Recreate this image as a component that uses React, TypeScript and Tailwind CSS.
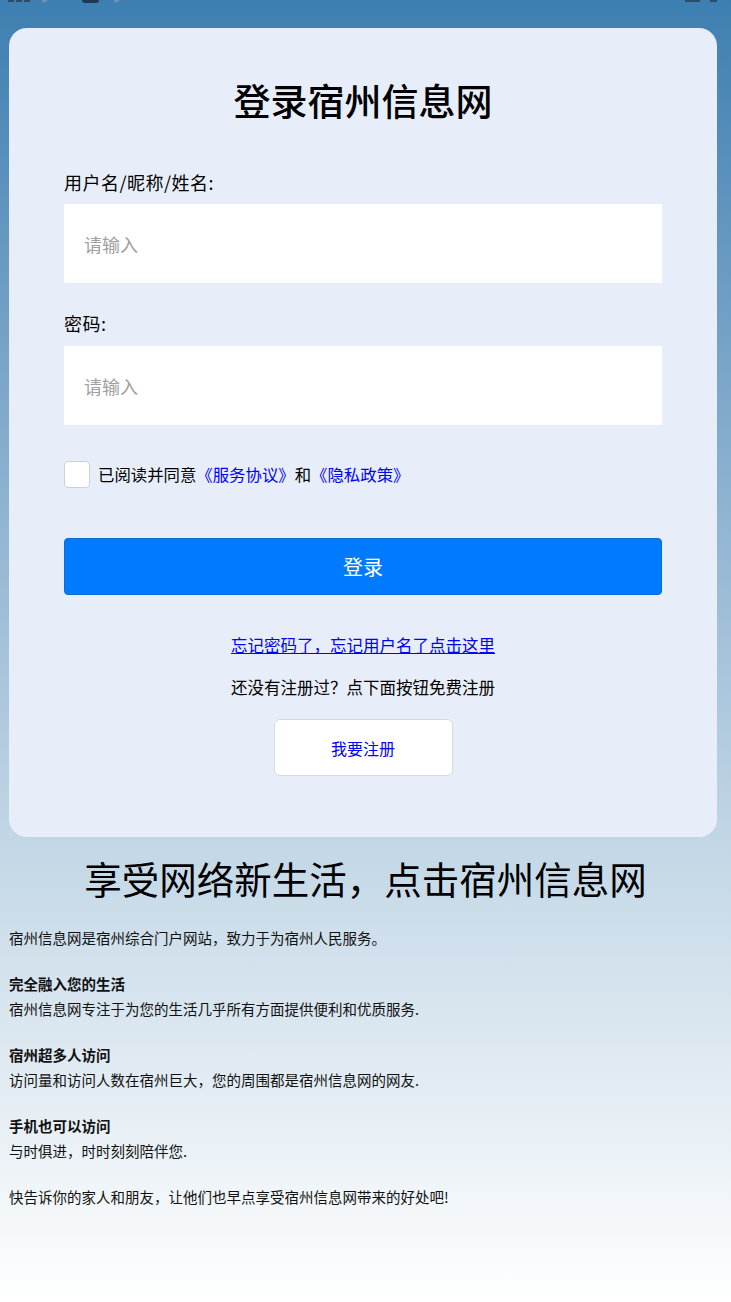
import React from 'react';

const font = { fontFamily: '"Noto Sans CJK SC", "Noto Sans", sans-serif' };

const blocks = [
  { title: '完全融入您的生活', desc: '宿州信息网专注于为您的生活几乎所有方面提供便利和优质服务.' },
  { title: '宿州超多人访问', desc: '访问量和访问人数在宿州巨大，您的周围都是宿州信息网的网友.' },
  { title: '手机也可以访问', desc: '与时俱进，时时刻刻陪伴您.' },
];

export default function App() {
  return (
    <div
      className="min-h-[1302px] w-full bg-gradient-to-b from-[#3d7fb1] via-[#c3d7e6] via-65% to-white text-black"
      style={font}
    >
      {/* clipped status bar */}
      <div className="flex h-[28px] items-start px-[8px]">
        <div className="flex h-[3px] items-start gap-[2px]">
          <span className="h-[2px] w-[6px] bg-[#2a4d6b]" />
          <span className="h-[2px] w-[6px] bg-[#2a4d6b]" />
          <span className="h-[2px] w-[6px] bg-[#2a4d6b]" />
        </div>
        <span className="ml-[12px] h-[2px] w-[5px] bg-[#6a93b3]" />
        <span className="ml-[35px] h-[3px] w-[17px] rounded-b-[3px] bg-[#1e3a52]" />
        <span className="ml-[15px] h-[2px] w-[5px] bg-[#6a93b3]" />
        <div className="flex-1" />
        <span className="h-[2px] w-[15px] bg-[#2a4d6b]" />
        <span className="ml-[10px] h-[2px] w-[7px] bg-[#2a4d6b]" />
        <span className="w-[6px]" />
      </div>

      <div className="mx-[9px] w-[708px] rounded-[18px] bg-[#e8eef9] px-[55px] pb-[61px] pt-[44px]">
        <h1 className="text-center text-[37px] font-medium leading-[56px]">登录宿州信息网</h1>

        <div className="mt-[41px] text-[18px] leading-[26px] tracking-[0.5px]">用户名/昵称/姓名:</div>
        <input
          className="mt-[9px] block h-[79px] w-full bg-white px-[20px] text-[18px] outline-none placeholder:text-[#a0a0a0]"
          placeholder="请输入"
        />

        <div className="mt-[27px] text-[18px] leading-[26px] tracking-[0.5px]">密码:</div>
        <input
          type="password"
          className="mt-[10px] block h-[79px] w-full bg-white px-[20px] text-[18px] outline-none placeholder:text-[#a0a0a0]"
          placeholder="请输入"
        />

        <label className="mt-[36px] flex items-center gap-[8px] text-[16.4px] leading-[27px]">
          <span className="h-[27px] w-[26px] shrink-0 rounded-[4px] border border-[#cfcfcf] bg-white" />
          <span>
            已阅读并同意<span className="text-[#0000ff]">《服务协议》</span>和
            <span className="text-[#0000ff]">《隐私政策》</span>
          </span>
        </label>

        <button className="mt-[50px] block h-[57px] w-full rounded-[4px] border border-[#0a6ad6] bg-[#007bff] text-[20px] text-white">
          登录
        </button>

        <div className="mt-[38px] text-center text-[16.5px] leading-[24px]">
          <a className="text-[#0000ff] underline">忘记密码了，忘记用户名了点击这里</a>
        </div>
        <div className="mt-[18px] text-center text-[16.5px] leading-[24px]">还没有注册过？点下面按钮免费注册</div>

        <div className="mt-[20px] flex justify-center">
          <button className="h-[57px] w-[179px] rounded-[6px] border border-[#d9d9d9] bg-white text-[16px] text-[#0000ff]">
            我要注册
          </button>
        </div>
      </div>

      <h2 className="mt-[17px] text-center text-[37.5px] leading-[48px]">享受网络新生活，点击宿州信息网</h2>

      <div className="mt-[23px] px-[9px] pb-[80px] text-[14.5px] leading-[25px] text-[#111]">
        <div>宿州信息网是宿州综合门户网站，致力于为宿州人民服务。</div>
        {blocks.map((b) => (
          <div key={b.title} className="mt-[21px]">
            <div className="font-bold">{b.title}</div>
            <div>{b.desc}</div>
          </div>
        ))}
        <div className="mt-[21px]">快告诉你的家人和朋友，让他们也早点享受宿州信息网带来的好处吧!</div>
      </div>
    </div>
  );
}
